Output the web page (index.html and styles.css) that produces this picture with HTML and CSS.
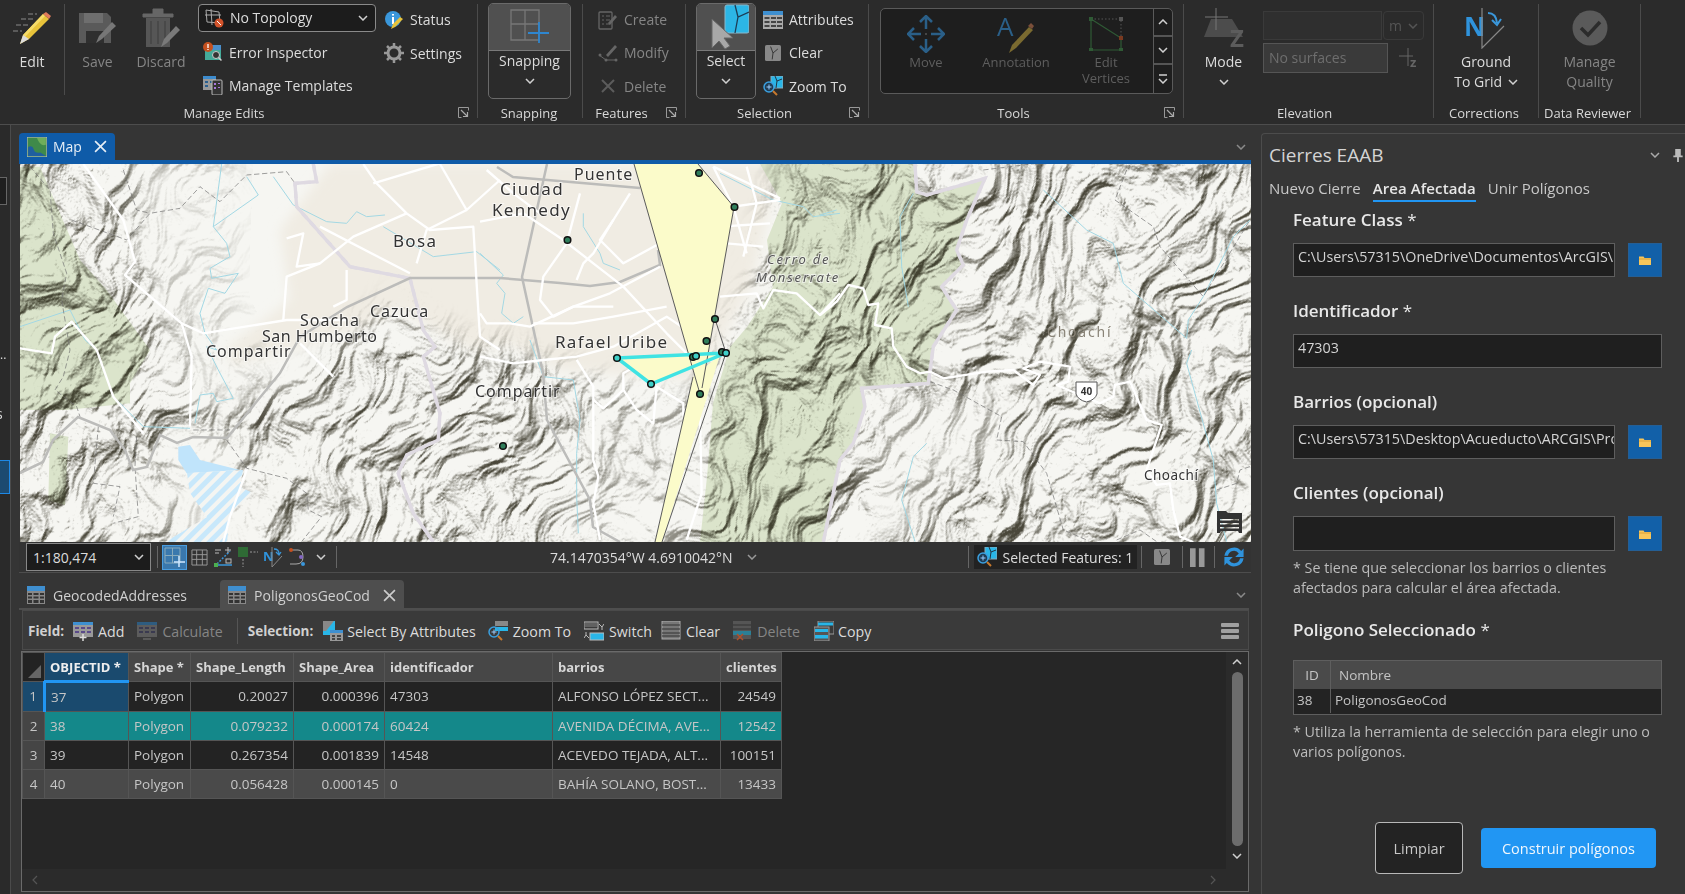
FILE: index.html
```html
<!DOCTYPE html>
<html>
    <head>
        <meta charset="UTF-8">
        <title>Cierres EAAB</title>
        <link rel="stylesheet" href="styles.css">
    </head>
    <body>
        <!-- shared icons -->
        <svg class="defs" width="0" height="0">
            <symbol id="chev" viewBox="0 0 10 6"><path d="M1 1l4 4 4-4" fill="none" stroke="currentColor" stroke-width="1.5"/></symbol>
            <symbol id="launch" viewBox="0 0 11 11"><path d="M.5 10.5V.5h10v3M.5 10.5h3" fill="none" stroke="#999"/><path d="M3 3l6 6M9.5 5v4.5H5" fill="none" stroke="#aaa" stroke-width="1.2"/></symbol>
            <symbol id="tbl" viewBox="0 0 18 18"><rect x="0" y="0" width="18" height="18" fill="#888"/><rect x="0" y="0" width="18" height="5" fill="#3f8fd0"/><path d="M1 7h4v2H1zM6.500 7h5v2h-5zM13 7h4v2h-4zM1 10.500h4v2H1zM6.500 10.500h5v2h-5zM13 10.500h4v2h-4zM1 14h4v3H1zM6.500 14h5v3h-5zM13 14h4v3h-4z" fill="#333"/></symbol>
            <symbol id="closex" viewBox="0 0 12 12"><path d="M1 1l10 10M11 1L1 11" stroke="currentColor" stroke-width="1.5" fill="none"/></symbol>
            <symbol id="folder" viewBox="0 0 12 10"><path d="M0 1.500h4.500l1 1.500H12v7H0z" fill="#f7c65b"/><path d="M0 3.500h12v1H0z" fill="#d9a03a"/></symbol>
            <symbol id="parcel" viewBox="0 0 20 20"><rect width="20" height="20" rx="2" fill="#888"/><path d="M7 2l3 8 6-5M10 10l-1 8" stroke="#333" fill="none" stroke-width="1.200"/></symbol>
            <symbol id="zoomsel" viewBox="0 0 20 20"><rect x="8" y="0" width="12" height="12" fill="#29b6e8" stroke="#8ab"/><path d="M12 0l2 5 5-2M14 5l-1 7" stroke="#234" fill="none"/><circle cx="6" cy="11" r="5" fill="#1f3d55" stroke="#3ba0e0" stroke-width="1.500"/><path d="M3.500 11h5M6 8.500v5" stroke="#9cf"/><path d="M10 15l4 4" stroke="#c8792e" stroke-width="2"/></symbol>
        </svg>

        <header class="ribbon">
            <section class="group g-edits">
                <div class="body">
                    <div class="big big-edit">
                        <div class="big-ico">
                            <svg width="40" height="34" viewBox="0 0 40 34"><path d="M8 33l3-9L31 3l6 5-20 20z" fill="#e8c33a"/><path d="M11 24l20-21 2 2-20 21z" fill="#f5dc6a"/><path d="M31 3l3-2 5 4-2 3z" fill="#e07b5a"/><path d="M8 33l3-9 6 4z" fill="#ddd"/><path d="M16 3h9M9 8h14M4 14h13M1 20h9" stroke="#8a8a8a" stroke-dasharray="5 2"/></svg>
                        </div>
                        <span>Edit</span>
                    </div>
                    <div class="big big-save dim">
                        <div class="big-ico">
                            <svg width="40" height="36" viewBox="0 0 40 36"><path d="M1 3h28l4 4v26H1z" fill="#5a5a5a"/><path d="M6 3h19v10H6z" fill="#6e6e6e"/><path d="M8 21h18v12H8z" fill="#2f2f2f"/><path d="M18 33l3-7 13-14 4 4-14 13z" fill="#777"/></svg>
                        </div>
                        <span>Save</span>
                    </div>
                    <div class="big big-discard dim">
                        <div class="big-ico">
                            <svg width="40" height="42" viewBox="0 0 40 42"><path d="M2 7h30v3H2zM12 7V2h10v5" fill="#666" stroke="#666"/><path d="M5 11h24v29H5z" fill="#565656"/><path d="M10 14v23M17 14v23M24 14v23" stroke="#3c3c3c"/><path d="M20 40l3-8 12-13 4 4-13 13z" fill="#7a7a7a"/></svg>
                        </div>
                        <span>Discard</span>
                    </div>
                    <div class="rows rows-topo">
                        <div class="combo">
                            <svg class="ico" viewBox="0 0 20 20"><path d="M2 2l13 2 1 11-13-1zM1 7h16M7 1l1 16" fill="none" stroke="#aaa"/><circle cx="15" cy="15" r="4.500" fill="#d2532b"/><path d="M13 13l4 4" stroke="#fff"/></svg>
                            <span class="combo-text">No Topology</span>
                            <svg class="chev" viewBox="0 0 10 6"><use href="#chev"/></svg>
                        </div>
                        <div class="row">
                            <svg class="ico" viewBox="0 0 20 20"><rect x="2" y="3" width="16" height="15" fill="#4a9"/><path d="M2 3h16v5H2z" fill="#4a8fcb"/><circle cx="5" cy="5" r="5" fill="#c4501f"/><path d="M5 2v4M5 7v1" stroke="#fff" stroke-width="1.300"/><circle cx="13" cy="13" r="3.500" fill="#333" stroke="#ccc"/><path d="M15.500 15.500l3 3" stroke="#ccc" stroke-width="1.500"/></svg>
                            <span>Error Inspector</span>
                        </div>
                        <div class="row">
                            <svg class="ico" viewBox="0 0 20 20"><rect x="0" y="1" width="13" height="14" fill="#999"/><rect x="0" y="1" width="13" height="3" fill="#3d8bcd"/><path d="M2 6h3v2H2zM7 6h4v2H7zM2 10h3v2H2z" fill="#2a5f8f"/><rect x="9" y="5" width="10" height="15" rx="1" fill="#333" stroke="#bbb"/><path d="M11 8h2v2h-2zM15 8h2v1h-2zM11 12h2v2h-2zM15 12h2v1h-2z" fill="#a7d"/></svg>
                            <span>Manage Templates</span>
                        </div>
                    </div>
                    <div class="rows rows-status">
                        <div class="row">
                            <svg class="ico" viewBox="0 0 20 20"><circle cx="9" cy="9" r="8" fill="#3a97db"/><path d="M9 4v1.500M9 7v7" stroke="#fff" stroke-width="2"/><path d="M7 19l2-5 7-7 3 2-8 8z" fill="#e8c33a"/></svg>
                            <span>Status</span>
                        </div>
                        <div class="row">
                            <svg class="ico" viewBox="0 0 20 20"><circle cx="10" cy="10" r="6" fill="none" stroke="#999" stroke-width="3"/><path d="M10 0v4M10 16v4M0 10h4M16 10h4M3 3l3 3M14 14l3 3M17 3l-3 3M6 14l-3 3" stroke="#999" stroke-width="2.500"/></svg>
                            <span>Settings</span>
                        </div>
                    </div>
                </div>
                <div class="glabel gl-edits"><span class="gl-text">Manage Edits</span><svg class="launcher" viewBox="0 0 11 11"><use href="#launch"/></svg></div>
            </section>

            <section class="group g-snap">
                <div class="body">
                    <div class="split">
                        <div class="split-top">
                            <svg width="40" height="36" viewBox="0 0 40 36"><path d="M1 1h28v30H1zM1 15h28M15 1v30" fill="none" stroke="#777" stroke-width="1.300"/><path d="M29 13v21M18 24h21" stroke="#2e86cf" stroke-width="1.800"/></svg>
                        </div>
                        <span>Snapping</span>
                        <svg class="chev chev-b" viewBox="0 0 10 6"><use href="#chev"/></svg>
                    </div>
                </div>
                <div class="glabel gl-snap"><span class="gl-text">Snapping</span></div>
            </section>

            <section class="group g-features">
                <div class="body">
                    <div class="rows rows-feat dim">
                        <div class="row">
                            <svg class="ico" viewBox="0 0 20 20"><rect x="1" y="2" width="13" height="17" rx="1" fill="none" stroke="#666" stroke-width="1.300"/><path d="M4 6h2M8 6h4M4 10h2M8 10h4M4 14h2M8 14h4" stroke="#666"/><path d="M10 13l7-8 2 2-7 8z" fill="#666"/></svg>
                            <span>Create</span>
                        </div>
                        <div class="row">
                            <svg class="ico" viewBox="0 0 20 20"><path d="M1 12l7 5h10" fill="none" stroke="#666"/><circle cx="2" cy="12" r="1.500" fill="#666"/><circle cx="8" cy="17" r="1.500" fill="#666"/><circle cx="18" cy="17" r="1.500" fill="#666"/><path d="M8 12l9-10 2 2-9 10z" fill="#666"/></svg>
                            <span>Modify</span>
                        </div>
                        <div class="row">
                            <svg class="ico" viewBox="0 0 20 20"><path d="M4 4l12 12M16 4L4 16" stroke="#5c5c5c" stroke-width="2"/></svg>
                            <span>Delete</span>
                        </div>
                    </div>
                </div>
                <div class="glabel"><span class="gl-text">Features</span><svg class="launcher" viewBox="0 0 11 11"><use href="#launch"/></svg></div>
            </section>

            <section class="group g-selection">
                <div class="body">
                    <div class="split split-select">
                        <div class="split-top">
                            <svg width="46" height="46" viewBox="0 0 46 46"><rect x="22" y="1" width="24" height="28" rx="2" fill="#2cb6e6" stroke="#88b8cc"/><path d="M32 1l3 12 11-5M35 13l-3 16" stroke="#1c3c55" stroke-width="1.300" fill="none"/><path d="M9 15v29l7-7 6 8 5-3-6-8h9z" fill="#a8a8a8" stroke="#666"/></svg>
                        </div>
                        <span>Select</span>
                        <svg class="chev chev-b" viewBox="0 0 10 6"><use href="#chev"/></svg>
                    </div>
                    <div class="rows rows-sel">
                        <div class="row">
                            <svg class="ico" viewBox="0 0 20 20"><rect x="0" y="1" width="20" height="18" fill="#aaa"/><rect x="0" y="1" width="20" height="4" fill="#3e8fd0"/><path d="M1.500 7h5v2h-5zM8 7h5v2H8zM14 7h5v2h-5zM1.500 11h5v2h-5zM8 11h5v2H8zM14 11h5v2h-5zM1.500 15h5v2h-5zM8 15h5v2H8zM14 15h5v2h-5z" fill="#444"/></svg>
                            <span>Attributes</span>
                        </div>
                        <div class="row">
                            <svg class="ico ico-sm" viewBox="0 0 20 20"><use href="#parcel"/></svg>
                            <span>Clear</span>
                        </div>
                        <div class="row">
                            <svg class="ico" viewBox="0 0 20 20"><use href="#zoomsel"/></svg>
                            <span>Zoom To</span>
                        </div>
                    </div>
                </div>
                <div class="glabel"><span class="gl-text">Selection</span><svg class="launcher" viewBox="0 0 11 11"><use href="#launch"/></svg></div>
            </section>

            <section class="group g-tools">
                <div class="body">
                    <div class="tool-box">
                        <div class="tool">
                            <div class="tool-ico">
                                <svg width="38" height="38" viewBox="0 0 38 38"><path d="M19 1v13M19 24v13M1 19h13M24 19h13M13 7l6-6 6 6M13 31l6 6 6-6M7 13l-6 6 6 6M31 13l6 6-6 6" fill="none" stroke="#2a5f88" stroke-width="2.500"/><circle cx="19" cy="19" r="1" fill="#555"/></svg>
                            </div>
                            <span>Move</span>
                        </div>
                        <div class="tool">
                            <div class="tool-ico">
                                <svg class="anno" width="38" height="40" viewBox="0 0 38 40"><text class="anno-a" x="0" y="22">A</text><path d="M12 39l3-8 17-18 4 3-17 18z" fill="#7a6a30"/><path d="M31 12l3-3 3 3-2 3z" fill="#7a4f3a"/></svg>
                            </div>
                            <span>Annotation</span>
                        </div>
                        <div class="tool">
                            <div class="tool-ico">
                                <svg width="34" height="34" viewBox="0 0 34 34"><path d="M2 2l30 19v12H2z" fill="none" stroke="#2f5a35" stroke-width="1.200"/><path d="M2 2h30v19" fill="none" stroke="#555" stroke-dasharray="1.500 2"/><rect x="0" y="0" width="4" height="4" fill="#2f5a35"/><rect x="30" y="0" width="4" height="4" fill="#555"/><rect x="30" y="19" width="4" height="4" fill="#7a3a20"/><rect x="0" y="31" width="4" height="3" fill="#2f5a35"/><rect x="30" y="31" width="4" height="3" fill="#2f5a35"/></svg>
                            </div>
                            <span>Edit<br>Vertices</span>
                        </div>
                        <div class="tool-scroll">
                            <div class="ts-cell"><svg class="chev chev-up" viewBox="0 0 10 6"><use href="#chev"/></svg></div>
                            <div class="ts-cell"><svg class="chev" viewBox="0 0 10 6"><use href="#chev"/></svg></div>
                            <div class="ts-cell ts-more"><svg class="chev" viewBox="0 0 10 10"><path d="M1 1h8M1 5l4 4 4-4" fill="none" stroke="currentColor" stroke-width="1.500"/></svg></div>
                        </div>
                    </div>
                </div>
                <div class="glabel"><span class="gl-text">Tools</span><svg class="launcher" viewBox="0 0 11 11"><use href="#launch"/></svg></div>
            </section>

            <section class="group g-elev">
                <div class="body">
                    <div class="big big-mode">
                        <div class="big-ico">
                            <svg width="42" height="40" viewBox="0 0 42 40"><path d="M8 11h21l11 18H1z" fill="#4c4c4c"/><path d="M13 0v22M2 9h23" stroke="#777"/><text class="mode-z" x="27" y="39">Z</text></svg>
                        </div>
                        <span>Mode</span>
                        <svg class="chev chev-b" viewBox="0 0 10 6"><use href="#chev"/></svg>
                    </div>
                    <div class="elev-fields">
                        <div class="elev-row">
                            <div class="elev-input"></div>
                            <div class="elev-unit"><span>m</span><svg class="chev" viewBox="0 0 10 6"><use href="#chev"/></svg></div>
                        </div>
                        <div class="elev-row elev-row-2">
                            <div class="elev-surface">No surfaces</div>
                            <svg class="elev-z" viewBox="0 0 20 20"><path d="M9 0v18M0 8h14" stroke="#666"/><text class="elev-z-t" x="11" y="19">z</text></svg>
                        </div>
                    </div>
                </div>
                <div class="glabel gl-elev"><span class="gl-text">Elevation</span></div>
            </section>

            <section class="group g-corr">
                <div class="body">
                    <div class="big">
                        <div class="big-ico">
                            <svg width="44" height="42" viewBox="0 0 44 42"><text class="ngrid" x="0" y="29">N</text><path d="M18 1v40L40 19" fill="none" stroke="#888" stroke-width="1.200"/><path d="M24 6q8 0 9 10M28 13l5 5 4-6" fill="none" stroke="#3a97db" stroke-width="2"/></svg>
                        </div>
                        <span>Ground</span>
                        <span>To Grid <svg class="chev chev-in" viewBox="0 0 10 6"><use href="#chev"/></svg></span>
                    </div>
                </div>
                <div class="glabel gl-side"><span class="gl-text">Corrections</span></div>
            </section>

            <section class="group g-review">
                <div class="body">
                    <div class="big dim">
                        <div class="big-ico">
                            <svg width="36" height="36" viewBox="0 0 36 36"><circle cx="18" cy="18" r="17.500" fill="#5a5a5a"/><path d="M9 18l7 7 12-13" fill="none" stroke="#2c2c2c" stroke-width="3.500"/></svg>
                        </div>
                        <span>Manage</span>
                        <span>Quality</span>
                    </div>
                </div>
                <div class="glabel gl-side"><span class="gl-text">Data Reviewer</span></div>
            </section>
        </header>

        <main class="workspace">
            <aside class="rail">
                <div class="rail-strip">
                    <div class="rail-box"></div>
                    <div class="rail-dots">.. </div>
                    <div class="rail-letter">s</div>
                    <div class="rail-active"></div>
                </div>
            </aside>

            <div class="center">
                <div class="doc-tabs">
                    <div class="map-tab">
                        <svg class="map-thumb" viewBox="0 0 18 18"><rect width="18" height="18" fill="#3f8a4a" stroke="#bbb"/><path d="M1 17V9q4-2 5 2t6 3l5 3z" fill="#1f5f9f"/><path d="M9 1h8v6q-5 2-8-6z" fill="#6fae5a"/></svg>
                        <span>Map</span>
                        <svg class="tab-x" viewBox="0 0 12 12"><use href="#closex"/></svg>
                    </div>
                    <svg class="chev doc-chev" viewBox="0 0 10 6"><use href="#chev"/></svg>
                </div>

                <div class="map-frame">
                    <svg class="map" viewBox="20 164 1231 378" width="1231" height="378">
                        <defs>
                            <filter id="hill" x="0" y="0" width="100%" height="100%" color-interpolation-filters="sRGB">
                                <feTurbulence type="fractalNoise" baseFrequency="0.008" numOctaves="3" seed="5" result="warp"/>
                                <feTurbulence type="fractalNoise" baseFrequency="0.034 0.016" numOctaves="7" seed="23" result="ridge"/>
                                <feDisplacementMap in="ridge" in2="warp" scale="120" xChannelSelector="R" yChannelSelector="G" result="bent"/>
                                <feDiffuseLighting in="bent" surfaceScale="15" diffuseConstant="1.270" lighting-color="#ffffff">
                                    <feDistantLight azimuth="215" elevation="55"/>
                                </feDiffuseLighting>
                                <feComponentTransfer>
                                    <feFuncR type="table" tableValues="0.30 1"/>
                                    <feFuncG type="table" tableValues="0.29 1"/>
                                    <feFuncB type="table" tableValues="0.24 1"/>
                                </feComponentTransfer>
                            </filter>
                            <filter id="soft"><feGaussianBlur stdDeviation="14"/></filter>
                            <filter id="soft-s"><feGaussianBlur stdDeviation="6"/></filter>
                            <mask id="hillmask" maskUnits="userSpaceOnUse" x="20" y="164" width="1231" height="378">
                                <rect x="20" y="164" width="1231" height="378" fill="#fff"/>
                                <g filter="url(#soft)">
                                    <polygon fill="#444" points="130,150 250,150 260,400 210,420 150,300"/>
                                    <polygon fill="#000" points="230,130 790,130 755,290 715,350 705,400 640,395 560,370 510,345 470,350 400,300 330,350 275,400 225,300"/>
                                    <polygon fill="#888" points="590,400 700,400 690,560 560,560"/>
                                    <polygon fill="#333" points="175,440 240,440 240,560 170,560"/>
                                    <polygon fill="#888" points="905,390 1010,400 1000,450 930,520 880,560 860,450"/>
                                </g>
                            </mask>
                            <pattern id="hatch" width="9" height="9" patternUnits="userSpaceOnUse" patternTransform="rotate(-45)">
                                <rect width="9" height="9" fill="#f4f5f2"/>
                                <rect width="9" height="5" fill="#c8e8fb"/>
                            </pattern>
                        </defs>

                        <rect x="20" y="164" width="1231" height="378" fill="#f6f6f2"/>
                        <polygon fill="#f0ece3" filter="url(#soft-s)" points="330,164 780,164 750,290 715,350 690,380 560,370 510,345 470,350 400,310 340,335 235,365 225,350 290,300 280,230"/>

                        <g class="green">
                            <polygon transform="translate(0,150) scale(.3333)" points="60,50 120,50 240,330 320,420 450,600 390,700 390,760 200,780 60,780"/>
                            <polygon transform="translate(0,150) scale(.3333)" points="150,850 205,860 195,1065 145,1050"/>
                            <polygon points="760,164 915,164 917,192 927,195 985,178 967,220 957,250 963,265 942,287 957,310 933,347 928,383 862,388 865,407 853,443 840,460 823,542 700,542 707,477 713,403 730,347 747,327 773,287 767,240 782,203"/>
                        </g>

                        <g class="hill" mask="url(#hillmask)">
                            <rect x="-250" y="-250" width="1800" height="1200" filter="url(#hill)" transform="rotate(30 635 353)"/>
                        </g>

                        <g transform="translate(0,150) scale(.3333)">
                            <polygon class="lake" points="535,890 570,885 600,930 720,960 560,970 535,930"/>
                            <polygon fill="url(#hatch)" transform="scale(3)" points="187,323 243,320 240,337 253,343 230,363 227,392 165,392 177,385 207,367 190,343"/>
                        </g>

                        <g class="streams">
                            <g transform="translate(0,150) scale(.3333)">
                                <polyline points="665,42 640,230 680,280 690,320 630,355 635,385 715,370 675,430 625,415 600,490 615,550 650,600 620,590 655,660 700,745 650,755 640,730 600,735 585,820"/>
                                <polyline points="820,80 880,165 980,215 1040,220 1070,185 1100,200 1155,195"/>
                                <polyline points="740,80 775,135 640,230"/>
                                <polyline points="60,530 210,480 255,570 290,600 340,740 430,830 570,835"/>
                                <polyline points="1150,230 1300,320 1430,305 1500,360"/>
                            </g>
                            <g transform="translate(480,160) scale(.3333)">
                                <polyline points="0,280 70,345 50,370 75,400 65,460 100,490 130,470"/>
                                <polyline points="310,160 310,200 360,280 370,310 420,330"/>
                                <polyline points="150,540 190,650 280,660 300,780 290,880 290,1010 295,1120"/>
                                <polyline points="720,40 880,120 970,140 1000,170 1080,160"/>
                            </g>
                            <g transform="translate(820,150) scale(.3333)">
                                <polyline points="670,120 800,240 880,280 910,400 1100,565 1105,510 1150,440 1240,260 1290,210"/>
                                <polyline points="1115,600 1100,640 1180,930 1190,1060 1220,1175"/>
                                <polyline points="320,880 280,920 245,1050 285,1175"/>
                                <polyline points="280,130 240,200 245,350 265,470"/>
                                <polyline points="0,195 50,180"/>
                            </g>
                        </g>

                        <g class="admin">
                            <g transform="translate(0,150) scale(.3333)">
                                <polyline points="90,50 150,120 160,250 200,370 185,450 210,600 190,680 165,720 230,770 240,800"/>
                                <polyline points="215,210 380,270 450,190 540,175 600,110 660,155 740,75 860,65 885,100"/>
                                <polyline points="370,60 410,180 450,190"/>
                                <polyline points="410,860 405,950 415,1100 340,1120"/>
                                <polyline points="680,870 740,955 860,985 920,1030 925,1080 965,1100 905,1175"/>
                                <polyline points="295,830 280,1000 360,1010 340,1100"/>
                                <polyline points="580,840 690,840"/>
                            </g>
                            <g transform="translate(820,150) scale(.3333)">
                                <polyline points="490,60 650,40"/>
                                <polyline points="920,60 885,150 1000,230 1020,290 1150,440 1290,210"/>
                                <polyline points="330,695 400,720 545,800 530,870 610,875 680,970 730,1140 800,1170"/>
                                <polyline points="890,1170 960,1140 1010,1175"/>
                                <polyline points="1190,1020 1250,1000 1260,960 1290,950"/>
                            </g>
                        </g>

                        <g class="border-casing">
                            <polyline id="dept1" transform="translate(0,150) scale(.3333)" points="940,42 950,95 885,100 890,170 1050,350 1230,385 1270,540 1305,590 1270,620 1320,790 1315,870 1220,915 1195,970 1240,1090 1300,1176"/>
                            <polyline id="dept2" transform="translate(820,150) scale(.3333)" points="285,42 290,125 320,135 495,85 440,210 410,300 430,345 365,410 410,480 340,590 325,700 125,715 135,770 100,880 60,930 10,1176"/>
                        </g>
                        <g class="border-dash">
                            <use href="#dept1"/>
                            <use href="#dept2"/>
                        </g>

                        <g class="grey-roads">
                            <polyline points="20,473 43,462 53,440 78,417 110,430 125,450 133,470 147,467 160,435 177,443 193,437 227,438 280,373 300,337 347,307 410,278 500,278 560,283 590,286 620,282 660,265 658,250"/>
                            <polyline points="547,164 522,277 543,373 547,420 590,500 593,527 620,542"/>
                            <polyline points="497,167 513,177 640,188"/>
                        </g>

                        <g class="white-roads">
                            <g transform="translate(0,150) scale(.3333)">
                                <polyline points="250,42 370,210 405,335 375,375 545,520 575,620 570,830"/>
                                <polyline points="545,520 610,550 860,510 1040,510"/>
                                <polyline points="60,595 155,610 165,560 215,515 290,600 340,740 430,850"/>
                                <polyline points="1090,42 1130,100 1220,190 1290,240 1420,230 1430,400 1440,560 1500,600"/>
                                <polyline points="1120,100 1320,40"/>
                                <polyline points="1220,190 1060,260 960,340 860,380 850,510"/>
                                <polyline points="1320,42 1400,180 1500,90"/>
                                <polyline points="1400,180 1280,240 1250,340"/>
                                <polyline points="860,265 910,250 890,350 960,340"/>
                                <polyline points="960,230 1230,370"/>
                                <polyline points="1040,360 1040,450 1000,470"/>
                                <polyline points="900,580 1000,680"/>
                                <polyline points="740,960 690,1100 670,1176"/>
                            </g>
                            <g transform="translate(480,160) scale(.3333)">
                                <polyline points="0,185 130,160 250,240 340,310 430,380 560,520 640,600"/>
                                <polyline points="300,100 260,250 190,350 180,420 220,470 280,440 400,440"/>
                                <polyline points="0,460 20,490 90,490 150,500 280,440 390,400 540,320"/>
                                <polyline points="400,180 340,280 310,310 290,360"/>
                                <polyline points="450,100 400,180 360,240 430,310 540,250"/>
                                <polyline points="160,490 280,490 400,470 560,440"/>
                                <polyline points="0,590 100,610 190,600 290,590 400,560 560,470 620,510"/>
                                <polyline points="290,600 340,680 340,900 355,950 340,1030 360,1140"/>
                                <polyline points="340,720 370,745 430,690 430,640 500,600"/>
                                <polyline points="430,690 470,750 520,790 530,680 610,730 610,770"/>
                                <polyline points="660,760 665,1000 620,1140"/>
                                <polyline points="20,30 100,100 180,160"/>
                                <polyline points="700,20 760,140 800,280"/>
                                <polyline points="760,140 900,120"/>
                                <polyline points="700,20 900,115"/>
                                <polyline points="800,20 830,130 790,290"/>
                                <polyline points="740,250 850,260"/>
                                <polyline points="720,200 870,190"/>
                                <polyline points="720,410 830,400 850,445 880,390 950,400 1020,465 1080,400"/>
                            </g>
                            <polyline transform="translate(820,150) scale(.3333)" points="0,495 50,455 85,405 130,415 145,465 175,460 165,525 215,535 220,590 260,650 300,670 330,665 370,685 500,665 580,660 640,705 660,675 610,655 660,635 750,650 745,695 710,705 840,760 880,740 885,705 930,695 980,810 1025,825 1000,900 980,960 1010,1005 1050,1000 1060,1080 1080,1160 1120,1176"/>
                        </g>

                        <g class="yellow">
                            <polygon points="634,164 698,164 734,207 702,388 700,394"/>
                            <polygon points="720,355 662,542 655,542 693,377"/>
                        </g>
                        <polygon class="sel-fill" points="617,358 726,353 651,384"/>
                        <g class="poly-line">
                            <polyline points="634,164 700,394"/>
                            <polyline points="698,164 734,207 702,388"/>
                            <polyline points="715,319 726,353"/>
                            <polyline points="693,377 655,542"/>
                            <polyline points="726,353 662,542"/>
                        </g>
                        <polygon class="sel-line" points="617,358 726,353 651,384"/>

                        <g class="dots">
                            <circle cx="699" cy="173" r="3.300"/>
                            <circle cx="734.500" cy="207" r="3.300"/>
                            <circle cx="567.500" cy="240" r="3.300"/>
                            <circle cx="715" cy="319" r="3.300"/>
                            <circle cx="706.500" cy="341" r="3.300"/>
                            <circle cx="700" cy="394" r="3.300"/>
                            <circle cx="503" cy="446" r="3.300"/>
                            <circle cx="693" cy="357" r="3.300"/>
                            <circle cx="722" cy="352" r="3.300"/>
                        </g>
                        <g class="dots-sel">
                            <circle cx="617" cy="358" r="3.300"/>
                            <circle cx="651" cy="384" r="3.300"/>
                            <circle cx="696" cy="356" r="3.300"/>
                            <circle cx="726" cy="353" r="3.300"/>
                        </g>

                        <g class="lbl">
                            <text x="574" y="180">Puente</text>
                            <text class="lbl-big" x="500" y="195">Ciudad</text>
                            <text class="lbl-big" x="492" y="216">Kennedy</text>
                            <text class="lbl-big" x="393" y="247">Bosa</text>
                            <text x="370" y="317">Cazuca</text>
                            <text x="300" y="326">Soacha</text>
                            <text class="lbl-sm2" x="262" y="342">San Humberto</text>
                            <text x="206" y="357">Compartir</text>
                            <text class="lbl-big" x="555" y="348">Rafael Uribe</text>
                            <text x="475" y="397">Compartir</text>
                            <text class="lbl-it" x="767" y="264">Cerro de</text>
                            <text class="lbl-it" x="756" y="282">Monserrate</text>
                            <text class="lbl-light" x="1047" y="337">Choachí</text>
                            <text class="lbl-small" x="1144" y="480">Choachí</text>
                        </g>

                        <path d="M1076 382h21v12q-2 6-10.500 8-8.500-2-10.500-8z" fill="#fff" stroke="#555"/>
                        <text class="shield" x="1086.500" y="395">40</text>

                        <path class="mapnote" d="M1217 511h9l2 2h14v20h-3l-1-2h-17l-1 2h-3zM1220 519h19v1.500h-19zM1220 523h19v1.500h-19zM1220 527h19v1.500h-19z"/>
                    </svg>

                    <div class="status-bar">
                        <div class="scale-box"><span>1:180,474</span><svg class="chev" viewBox="0 0 10 6"><use href="#chev"/></svg></div>
                        <i class="vsep sep-a"></i>
                        <div class="st-active">
                            <svg width="22" height="21" viewBox="0 0 22 21"><path d="M1 1h15v15H1zM1 8.500h15M8.500 1v15" fill="none" stroke="#8ab" /><path d="M15 9v11M10 15h11" stroke="#cfe8ff" stroke-width="1.500"/></svg>
                        </div>
                        <svg class="st-ico st-grid" viewBox="0 0 18 18"><path d="M1 1h16v16H1zM1 6h16M1 11h16M6 1v16M12 1v16" fill="none" stroke="#999"/></svg>
                        <svg class="st-ico" viewBox="0 0 20 20"><path d="M4 17L17 4" stroke="#3a97db" stroke-dasharray="2 1.500" stroke-width="1.500"/><path d="M3 18h16" stroke="#3a97db" stroke-width="1.500"/><rect x="1" y="16" width="4" height="4" fill="#4caf50"/><rect x="13" y="12" width="5" height="4" fill="none" stroke="#bbb"/><path d="M2 3h6M2 6h4M12 3h6M15 0v6" stroke="#bbb"/></svg>
                        <svg class="st-ico" viewBox="0 0 20 20"><rect x="0" y="0" width="10" height="10" fill="#2f6b35"/><path d="M5 12v8M12 5h8" stroke="#999" stroke-dasharray="2 1.500"/></svg>
                        <svg class="st-ico" viewBox="0 0 20 20"><text class="ngrid-s" x="0" y="14">N</text><path d="M9 0v20L19 9" fill="none" stroke="#888"/><path d="M11 2q5 0 5 5M13 5l3 3 2-3" fill="none" stroke="#3a97db" stroke-width="1.300"/></svg>
                        <svg class="st-ico" viewBox="0 0 20 20"><path d="M3 3h7q5 0 5 7t-7 7H2" fill="none" stroke="#aaa"/><circle cx="3" cy="3" r="2" fill="#c4501f"/><circle cx="13" cy="10" r="2" fill="#8466c4"/><circle cx="15" cy="17" r="2" fill="#3a97db"/></svg>
                        <svg class="chev st-chev" viewBox="0 0 10 6"><use href="#chev"/></svg>
                        <i class="vsep sep-b"></i>
                        <span class="coords">74.1470354°W 4.6910042°N</span>
                        <svg class="chev coords-chev" viewBox="0 0 10 6"><use href="#chev"/></svg>
                        <i class="vsep sep-c"></i>
                        <div class="sel-count">
                            <svg class="st-ico" viewBox="0 0 20 20"><use href="#zoomsel"/></svg>
                            <span>Selected Features: 1</span>
                        </div>
                        <i class="vsep sep-d"></i>
                        <svg class="st-parcel" viewBox="0 0 20 20"><use href="#parcel"/></svg>
                        <i class="vsep sep-e"></i>
                        <svg class="st-pause" viewBox="0 0 16 20"><path d="M0 0h6v20H0zM9.500 0h6v20h-6z" fill="#999"/></svg>
                        <i class="vsep sep-f"></i>
                        <svg class="st-refresh" viewBox="0 0 20 20"><path d="M2 9a8 8 0 0 1 14-4l2-2v7h-7l3-3a5 5 0 0 0-9 2zM18 11a8 8 0 0 1-14 4l-2 2v-7h7l-3 3a5 5 0 0 0 9-2z" fill="#2f93dc"/></svg>
                    </div>
                </div>

                <div class="table-tabs">
                    <div class="t-tab">
                        <svg class="tbl-ico" viewBox="0 0 18 18"><use href="#tbl"/></svg>
                        <span>GeocodedAddresses</span>
                    </div>
                    <div class="t-tab t-tab-on">
                        <svg class="tbl-ico" viewBox="0 0 18 18"><use href="#tbl"/></svg>
                        <span>PoligonosGeoCod</span>
                        <svg class="tab-x tab-x-t" viewBox="0 0 12 12"><use href="#closex"/></svg>
                    </div>
                    <svg class="chev doc-chev" viewBox="0 0 10 6"><use href="#chev"/></svg>
                </div>

                <div class="table-panel">
                    <div class="toolbar">
                        <b class="tb-head">Field:</b>
                        <div class="tb-btn tb-add">
                            <svg class="tb-ico" viewBox="0 0 20 20"><rect y="1" width="20" height="15" fill="#999"/><rect y="1" width="20" height="3" fill="#3e8fd0"/><path d="M2 6h4v2H2zM8 6h4v2H8zM14 6h4v2h-4zM2 10h4v2H2zM8 10h4v2H8zM14 10h4v2h-4z" fill="#5a4a8a"/><path d="M10 13v7M6.500 16.500h7" stroke="#ddd" stroke-width="1.500"/></svg>
                            <span>Add</span>
                        </div>
                        <div class="tb-btn tb-calc dim">
                            <svg class="tb-ico" viewBox="0 0 20 20"><rect y="1" width="20" height="15" fill="#5c5c5c"/><rect y="1" width="20" height="3" fill="#2e5c80"/><path d="M2 6h4v2H2zM8 6h4v2H8zM14 6h4v2h-4zM2 10h4v2H2zM8 10h4v2H8zM14 10h4v2h-4z" fill="#3a3a50"/><path d="M6 18h8" stroke="#666" stroke-width="1.500"/></svg>
                            <span>Calculate</span>
                        </div>
                        <i class="tb-sep"></i>
                        <b class="tb-head">Selection:</b>
                        <div class="tb-btn tb-sba">
                            <svg class="tb-ico" viewBox="0 0 20 20"><path d="M0 0h12v14H0z" fill="#29b6e8"/><path d="M0 0h11L3 10H0z" fill="#888"/><rect x="7" y="9" width="13" height="11" fill="#999"/><rect x="7" y="9" width="13" height="3" fill="#3e8fd0"/><path d="M9 14h3v2H9zM14 14h4v2h-4zM9 17h3v2H9zM14 17h4v2h-4z" fill="#444"/></svg>
                            <span>Select By Attributes</span>
                        </div>
                        <div class="tb-btn tb-zoom">
                            <svg class="tb-ico" viewBox="0 0 20 20"><rect x="7" y="0" width="13" height="5" fill="#888"/><rect x="7" y="6" width="13" height="4" fill="#29b6e8"/><circle cx="6" cy="11" r="5" fill="none" stroke="#3ba0e0" stroke-width="1.500"/><path d="M3.500 11h5M6 8.500v5" stroke="#9cf"/><path d="M10 15l4 4" stroke="#c8792e" stroke-width="2"/></svg>
                            <span>Zoom To</span>
                        </div>
                        <div class="tb-btn tb-switch">
                            <svg class="tb-ico" viewBox="0 0 20 20"><rect x="0" y="1" width="14" height="7" fill="none" stroke="#bbb"/><path d="M1 3h12M1 5h12" stroke="#888"/><rect x="6" y="12" width="14" height="7" fill="#29b6e8" stroke="#bbb"/><path d="M15 3l3 3 2-3M18 6v3M5 17l-3-3-2 3M2 14v-3" fill="none" stroke="#bbb"/></svg>
                            <span>Switch</span>
                        </div>
                        <div class="tb-btn tb-clear">
                            <svg class="tb-ico" viewBox="0 0 20 20"><rect x="1" y="0" width="18" height="18" fill="#777" stroke="#aaa"/><path d="M1 4h18M1 8h18M1 12h18M1 15h18" stroke="#333"/></svg>
                            <span>Clear</span>
                        </div>
                        <div class="tb-btn tb-del dim">
                            <svg class="tb-ico" viewBox="0 0 20 20"><rect x="1" y="0" width="18" height="18" fill="#555"/><path d="M1 4h18M1 8h18" stroke="#333"/><rect x="1" y="10" width="18" height="4" fill="#2b7f96"/><path d="M5 13l6 6M11 13l-6 6" stroke="#b2502a" stroke-width="1.500"/></svg>
                            <span>Delete</span>
                        </div>
                        <div class="tb-btn tb-copy">
                            <svg class="tb-ico" viewBox="0 0 20 20"><rect x="4" y="0" width="16" height="13" fill="none" stroke="#999"/><rect x="4" y="1.500" width="15" height="3" fill="#29b6e8"/><rect x="0" y="6" width="15" height="14" fill="#555" stroke="#999"/><rect x="1" y="8" width="13" height="3" fill="#29b6e8"/><rect x="1" y="14" width="13" height="3.500" fill="#29b6e8"/></svg>
                            <span>Copy</span>
                        </div>
                        <div class="tb-menu"><i></i><i></i><i></i></div>
                    </div>

                    <div class="grid-frame">
                        <div class="grid-main">
                            <table class="grid">
                                <colgroup>
                                    <col class="c-num"><col class="c-oid"><col class="c-shape"><col class="c-len"><col class="c-area"><col class="c-ident"><col class="c-barrios"><col class="c-cli">
                                </colgroup>
                                <tr class="head">
                                    <th class="corner"><span class="corner-tri"></span></th>
                                    <th class="sorted">OBJECTID *</th>
                                    <th>Shape *</th>
                                    <th>Shape_Length</th>
                                    <th>Shape_Area</th>
                                    <th>identificador</th>
                                    <th>barrios</th>
                                    <th>clientes</th>
                                </tr>
                                <tr class="r-cur">
                                    <td class="num">1</td><td class="oid">37</td><td>Polygon</td><td class="n">0.20027</td><td class="n">0.000396</td><td>47303</td><td>ALFONSO LÓPEZ SECT...</td><td class="n">24549</td>
                                </tr>
                                <tr class="r-sel">
                                    <td class="num">2</td><td>38</td><td>Polygon</td><td class="n">0.079232</td><td class="n">0.000174</td><td>60424</td><td>AVENIDA DÉCIMA, AVE...</td><td class="n">12542</td>
                                </tr>
                                <tr>
                                    <td class="num">3</td><td>39</td><td>Polygon</td><td class="n">0.267354</td><td class="n">0.001839</td><td>14548</td><td>ACEVEDO TEJADA, ALT...</td><td class="n">100151</td>
                                </tr>
                                <tr class="r-alt">
                                    <td class="num">4</td><td>40</td><td>Polygon</td><td class="n">0.056428</td><td class="n">0.000145</td><td>0</td><td>BAHÍA SOLANO, BOST...</td><td class="n">13433</td>
                                </tr>
                            </table>
                            <div class="hscroll">
                                <svg class="hs-l" viewBox="0 0 6 10"><path d="M5 1L1 5l4 4" fill="none" stroke="#555" stroke-width="1.200"/></svg>
                                <svg class="hs-r" viewBox="0 0 6 10"><path d="M1 1l4 4-4 4" fill="none" stroke="#555" stroke-width="1.200"/></svg>
                            </div>
                        </div>
                        <div class="vscroll">
                            <svg class="chev chev-up" viewBox="0 0 10 6"><use href="#chev"/></svg>
                            <div class="thumb"></div>
                            <svg class="chev" viewBox="0 0 10 6"><use href="#chev"/></svg>
                        </div>
                    </div>
                </div>
            </div>

            <section class="panel">
                <div class="panel-head">
                    <span class="panel-title">Cierres EAAB</span>
                    <svg class="chev panel-chev" viewBox="0 0 10 6"><use href="#chev"/></svg>
                    <svg class="panel-pin" viewBox="0 0 10 14"><path d="M2 0h6v7h2v2H6v5H4V9H0V7h2z" fill="#bbb"/></svg>
                </div>
                <nav class="panel-tabs">
                    <span>Nuevo Cierre</span>
                    <span class="on">Area Afectada</span>
                    <span>Unir Polígonos</span>
                </nav>
                <div class="form">
                    <label class="f-label f-first">Feature Class <em>*</em></label>
                    <div class="f-row">
                        <div class="f-input">C:\Users\57315\OneDrive\Documentos\ArcGIS\Projects</div>
                        <button class="f-btn"><svg viewBox="0 0 12 10"><use href="#folder"/></svg></button>
                    </div>
                    <label class="f-label">Identificador <em>*</em></label>
                    <div class="f-row">
                        <div class="f-input f-wide">47303</div>
                    </div>
                    <label class="f-label">Barrios (opcional)</label>
                    <div class="f-row">
                        <div class="f-input">C:\Users\57315\Desktop\Acueducto\ARCGIS\Projects</div>
                        <button class="f-btn"><svg viewBox="0 0 12 10"><use href="#folder"/></svg></button>
                    </div>
                    <label class="f-label">Clientes (opcional)</label>
                    <div class="f-row f-row-tall">
                        <div class="f-input"></div>
                        <button class="f-btn"><svg viewBox="0 0 12 10"><use href="#folder"/></svg></button>
                    </div>
                    <p class="f-note">* Se tiene que seleccionar los barrios o clientes<br>afectados para calcular el área afectada.</p>
                    <label class="f-label f-poly">Poligono Seleccionado <em>*</em></label>
                    <div class="mini">
                        <div class="mini-head"><span class="m-id">ID</span><span class="m-name">Nombre</span></div>
                        <div class="mini-row"><span class="m-id m-left">38</span><span class="m-name">PoligonosGeoCod</span></div>
                    </div>
                    <p class="f-note">* Utiliza la herramienta de selección para elegir uno o<br>varios polígonos.</p>
                </div>
                <div class="actions">
                    <button class="btn-clear">Limpiar</button>
                    <button class="btn-build">Construir polígonos</button>
                </div>
            </section>
        </main>
    </body>
</html>
```

FILE: styles.css
```css
html, body {
    width: 1685px;
    height: 894px;
    margin: 0;
    overflow: hidden;
}

body {
    background: #353535;
    color: #dcdcdc;
    font-family: "Open Sans", "Noto Sans", sans-serif;
    font-size: 14px;
    display: flex;
    flex-direction: column;
}

.defs {
    position: absolute;
}

.dim {
    color: #858585;
}

.chev {
    display: block;
    width: 10px;
    height: 6px;
    color: #d0d0d0;
    flex: none;
}

.chev-up {
    transform: rotate(180deg);
}

/* ribbon */
.ribbon {
    height: 124px;
    background: #2b2b2b;
    border-bottom: 1px solid #4d4d4d;
    display: flex;
    align-items: flex-start;
    flex: none;
}

.group {
    height: 114px;
    margin-top: 4px;
    border-right: 1px solid #4b4b4b;
    display: flex;
    flex-direction: column;
    flex: none;
    box-sizing: border-box;
}

.g-edits { width: 478px; }
.g-snap { width: 105px; }
.g-features { width: 103px; }
.g-selection { width: 183px; }
.g-tools { width: 315px; }
.g-elev { width: 250px; }
.g-corr { width: 105px; }
.g-review { width: 102px; }

.body {
    height: 99px;
    display: flex;
    flex: none;
}

.glabel {
    height: 15px;
    line-height: 20px;
    font-size: 13px;
    display: flex;
    color: #d8d8d8;
}

.gl-edits { padding-right: 0; }
.gl-edits .gl-text { padding-right: 4px; }
.gl-snap .gl-text { padding-right: 2px; }
.gl-elev .gl-text { padding-right: 8px; }
.gl-side .gl-text { padding-right: 4px; }

.gl-text {
    flex: 1;
    text-align: center;
}

.launcher {
    width: 11px;
    height: 11px;
    margin: 4px 8px 0 6px;
}

.big {
    display: flex;
    flex-direction: column;
    align-items: center;
    line-height: 20px;
    font-size: 14px;
    flex: 1;
}

.big-ico {
    height: 48px;
    display: flex;
    align-items: center;
    justify-content: center;
}

.chev-b {
    margin-top: 7px;
}

.chev-in {
    display: inline-block;
    margin-left: 2px;
    vertical-align: 2px;
}

.big-edit {
    flex: none;
    width: 64px;
    height: 91px;
    border-right: 1px solid #4b4b4b;
}

.big-save {
    flex: none;
    width: 65px;
}

.big-discard {
    flex: none;
    width: 62px;
}

.big-mode {
    flex: none;
    width: 79px;
}

.rows {
    display: flex;
    flex-direction: column;
    flex: none;
    margin-top: -1px;
}

.row {
    height: 33.500px;
    display: flex;
    align-items: center;
    gap: 6px;
    white-space: nowrap;
}

.ico {
    width: 20px;
    height: 20px;
    flex: none;
}

.ico-sm {
    padding: 2px;
    box-sizing: border-box;
}

.rows-topo {
    margin-left: 6px;
    margin-top: 0;
    width: 178px;
}

.rows-topo .row {
    padding-left: 5px;
    position: relative;
    top: -1px;
}

.combo {
    height: 28px;
    margin-bottom: 5px;
    box-sizing: border-box;
    border: 1px solid #8a8a8a;
    border-radius: 4px;
    background: #1c1c1c;
    display: flex;
    align-items: center;
    gap: 6px;
    padding: 0 7px 0 5px;
}

.combo-text {
    flex: 1;
}

.rows-status {
    margin-left: 8px;
}

.rows-feat {
    margin-left: 15px;
}

.rows-sel {
    margin-left: 7px;
    width: 90px;
    overflow: hidden;
}

.split {
    margin: -1px 0 0 10px;
    width: 83px;
    height: 96px;
    box-sizing: border-box;
    border: 1px solid #6a6a6a;
    border-radius: 5px;
    display: flex;
    flex-direction: column;
    align-items: center;
    line-height: 20px;
}

.split-top {
    width: 100%;
    height: 47px;
    flex: none;
    box-sizing: border-box;
    background: #505050;
    border-bottom: 1px solid #7a7a7a;
    border-radius: 4px 4px 0 0;
    display: flex;
    align-items: center;
    justify-content: center;
}

.split-select {
    width: 60px;
}

/* tool gallery */
.tool-box {
    margin: 4px 0 0 11px;
    width: 293px;
    height: 86px;
    box-sizing: border-box;
    background: #1e1e1e;
    border: 1px solid #5a5a5a;
    border-radius: 5px;
    display: flex;
}

.tool {
    width: 90px;
    padding-top: 4px;
    display: flex;
    flex-direction: column;
    align-items: center;
    text-align: center;
    font-size: 13px;
    line-height: 16px;
    color: #5e5e5e;
}

.tool-ico {
    height: 41px;
    display: flex;
    align-items: center;
    justify-content: center;
}

.anno {
    overflow: visible;
}

.anno-a {
    font-size: 26px;
    fill: #2a5f88;
}

.tool-scroll {
    margin-left: auto;
    width: 18px;
    border-left: 1px solid #5a5a5a;
    display: flex;
    flex-direction: column;
}

.ts-cell {
    height: 28px;
    border-bottom: 2px solid #555;
    box-sizing: border-box;
    display: flex;
    align-items: center;
    justify-content: center;
}

.ts-more {
    border-bottom: 0;
}

.ts-more .chev {
    height: 10px;
}

/* elevation */
.elev-fields {
    margin-top: 7px;
}

.elev-row {
    display: flex;
    align-items: center;
}

.elev-row-2 {
    margin-top: 3px;
}

.elev-input {
    width: 119px;
    height: 29px;
    box-sizing: border-box;
    background: #2f2f2f;
    border: 1px solid #3a3a3a;
}

.elev-unit {
    width: 41px;
    height: 29px;
    margin-left: 1px;
    box-sizing: border-box;
    border: 1px solid #3a3a3a;
    border-radius: 4px;
    display: flex;
    align-items: center;
    justify-content: center;
    gap: 6px;
    color: #555;
}

.elev-unit .chev {
    color: #555;
}

.elev-surface {
    width: 125px;
    height: 30px;
    line-height: 28px;
    padding-left: 5px;
    box-sizing: border-box;
    background: #3a3a3a;
    border: 1px solid #555;
    color: #6e6e6e;
}

.elev-z {
    width: 20px;
    height: 20px;
    margin-left: 11px;
}

.elev-z-t {
    font-size: 13px;
    font-weight: bold;
    fill: #666;
}

.mode-z {
    font-size: 24px;
    font-weight: bold;
    fill: #5c5c5c;
}

.ngrid {
    font-size: 26px;
    font-weight: bold;
    fill: #2f93dc;
}

.ngrid-s {
    font-size: 13px;
    font-weight: bold;
    fill: #2f93dc;
}

/* workspace */
.workspace {
    display: flex;
    flex: 1;
    min-height: 0;
}

.rail {
    width: 19px;
    flex: none;
}

.rail-strip {
    width: 11px;
    height: 100%;
    box-sizing: border-box;
    background: #2a2a2a;
    border-right: 1px solid #4b4b4b;
    overflow: hidden;
}

.rail-box {
    margin-top: 52px;
    width: 7px;
    height: 28px;
    box-sizing: border-box;
    background: #1e1e1e;
    border: 1px solid #666;
    border-left: 0;
}

.rail-dots {
    margin-top: 145px;
    height: 16px;
    line-height: 10px;
    font-size: 12px;
}

.rail-letter {
    margin-top: 38px;
    height: 20px;
    line-height: 20px;
    font-size: 14px;
    margin-left: -4px;
}

.rail-active {
    margin-top: 36px;
    width: 10px;
    height: 34px;
    box-sizing: border-box;
    background: #1c4a70;
    border: 1px solid #1e88e5;
    border-left: 0;
}

.center {
    width: 1234px;
    flex: none;
    display: flex;
    flex-direction: column;
}

.doc-tabs {
    height: 35px;
    display: flex;
    align-items: flex-end;
    flex: none;
}

.map-tab {
    width: 96px;
    height: 27px;
    box-sizing: border-box;
    background: #0f5ba8;
    border-radius: 4px 4px 0 0;
    padding: 0 8px;
    display: flex;
    align-items: center;
    gap: 6px;
    color: #e6eef6;
}

.map-thumb {
    width: 20px;
    height: 20px;
}

.tab-x {
    width: 13px;
    height: 13px;
    margin-left: auto;
    color: #e6eef6;
}

.doc-chev {
    margin: 0 7px 10px auto;
    color: #8a8a8a;
}

.map-frame {
    border-top: 4px solid #0f5ba8;
    flex: none;
    margin-right: 2px;
}

.map {
    display: block;
    margin-left: 1px;
}

.green polygon {
    fill: #dbe4cb;
}

.hill {
    mix-blend-mode: multiply;
}

.lake {
    fill: #c0e4fb;
}

.streams polyline {
    fill: none;
    stroke: #a3d8e4;
    stroke-width: 3;
}

.admin polyline {
    fill: none;
    stroke: #6f6f6f;
    stroke-width: 2;
    stroke-dasharray: 16 8;
}

.border-casing polyline {
    fill: none;
    stroke: #dfdae2;
    stroke-width: 10;
}

.border-dash use {
    fill: none;
    stroke: #8f8a94;
    stroke-width: 2;
    stroke-dasharray: 20 16;
}

.grey-roads polyline {
    fill: none;
    stroke: #bcbcba;
    stroke-width: 2.500;
}

.white-roads polyline {
    fill: none;
    stroke: #fff;
    stroke-width: 7;
    stroke-linejoin: round;
}

.yellow polygon,
.sel-fill {
    fill: #fbfbca;
}

.poly-line polyline {
    fill: none;
    stroke: #5a5a5a;
    stroke-width: 1;
}

.sel-line {
    fill: none;
    stroke: #3fe3e3;
    stroke-width: 3.500;
}

.dots circle {
    fill: #2f7d5a;
    stroke: #111;
    stroke-width: 1.500;
}

.dots-sel circle {
    fill: #3fd0c8;
    stroke: #111;
    stroke-width: 1.500;
}

.lbl text {
    font-family: "Noto Sans", sans-serif;
    font-size: 16px;
    letter-spacing: 1px;
    fill: #333;
    paint-order: stroke;
    stroke: rgba(255, 255, 255, .6);
    stroke-width: 2px;
}

.lbl .lbl-big {
    font-size: 17px;
    letter-spacing: 1.300px;
}

.lbl .lbl-sm2 {
    letter-spacing: .5px;
}

.lbl .lbl-it {
    font-size: 13px;
    font-style: italic;
    letter-spacing: 1.800px;
    fill: #555;
}

.lbl .lbl-light {
    font-size: 14px;
    letter-spacing: 1.800px;
    fill: #8a8478;
    stroke: none;
}

.lbl .lbl-small {
    font-size: 13.500px;
    letter-spacing: .5px;
}

.shield {
    font-size: 10px;
    font-weight: bold;
    text-anchor: middle;
    fill: #333;
}

.mapnote {
    fill: #333;
    fill-rule: evenodd;
}

/* status bar */
.status-bar {
    height: 30px;
    background: #333;
    border-bottom: 1px solid #4d4d4d;
    display: flex;
    align-items: center;
    padding-left: 7px;
}

.scale-box {
    width: 125px;
    height: 28px;
    flex: none;
    box-sizing: border-box;
    background: #1c1c1c;
    border: 1px solid #888;
    display: flex;
    align-items: center;
    justify-content: space-between;
    padding: 0 6px;
}

.vsep {
    display: block;
    width: 1px;
    height: 22px;
    background: #666;
    flex: none;
}

.sep-a { margin-left: 6px; }
.sep-b { margin-left: 10px; }
.sep-c { margin-left: 211px; }
.sep-d { margin-left: 4px; }
.sep-e { margin-left: 12px; }
.sep-f { margin-left: 9px; }

.st-active {
    margin-left: 4px;
    width: 25px;
    height: 25px;
    box-sizing: border-box;
    background: #3a78ad;
    border: 1px solid #4a9ee0;
    display: flex;
    align-items: center;
    justify-content: center;
    flex: none;
}

.st-ico {
    width: 20px;
    height: 20px;
    margin-left: 5px;
    flex: none;
}

.st-grid {
    width: 17px;
    height: 17px;
    margin-left: 4px;
}

.st-chev {
    margin-left: 8px;
}

.coords {
    margin-left: 213px;
    white-space: nowrap;
}

.coords-chev {
    margin-left: 14px;
    color: #999;
}

.sel-count {
    margin-left: 5px;
    width: 163px;
    height: 24px;
    background: #222;
    display: flex;
    align-items: center;
    gap: 6px;
    white-space: nowrap;
    flex: none;
}

.sel-count .st-ico {
    margin-left: 3px;
}

.st-parcel {
    width: 16px;
    height: 16px;
    margin-left: 12px;
    flex: none;
}

.st-pause {
    width: 15px;
    height: 19px;
    margin-left: 7px;
    flex: none;
}

.st-refresh {
    width: 24px;
    height: 24px;
    margin-left: 7px;
    flex: none;
}

/* attribute table */
.table-tabs {
    height: 35px;
    display: flex;
    align-items: flex-end;
    flex: none;
}

.t-tab {
    height: 28px;
    display: flex;
    align-items: center;
    gap: 8px;
    padding: 2px 8px 0;
    box-sizing: border-box;
    border-radius: 4px 4px 0 0;
    color: #d0d0d0;
    white-space: nowrap;
}

.t-tab-on {
    background: #4e4e4e;
    margin-left: 25px;
    width: 184px;
}

.tbl-ico {
    width: 18px;
    height: 18px;
    flex: none;
}

.tab-x-t {
    color: #ccc;
}

.table-panel {
    border-top: 2px solid #4e4e4e;
    flex: 1;
    min-height: 0;
    margin-right: 4px;
}

.toolbar {
    height: 40px;
    box-sizing: border-box;
    margin-left: 3px;
    padding-top: 2px;
    background: #3a3a3a;
    border: 1px solid #4a4a4a;
    display: flex;
    align-items: center;
    white-space: nowrap;
    font-size: 14.200px;
    position: relative;
}

.tb-head {
    margin-left: 5px;
    font-weight: 700;
    font-size: 13.500px;
    color: #d0d0d0;
}

.tb-btn {
    display: flex;
    align-items: center;
    gap: 5px;
}

.tb-ico {
    width: 20px;
    height: 20px;
    flex: none;
}

.tb-add { margin-left: 9px; }
.tb-calc { margin-left: 13px; }
.tb-sba { margin-left: 10px; gap: 4px; }
.tb-zoom { margin-left: 12px; }
.tb-switch { margin-left: 13px; }
.tb-clear { margin-left: 9px; }
.tb-del { margin-left: 12px; }
.tb-copy { margin-left: 14px; gap: 4px; }

.tb-sep {
    width: 1px;
    height: 26px;
    background: #555;
    margin: 0 5px 0 14px;
}

.tb-menu {
    margin: 0 9px 0 auto;
    display: flex;
    flex-direction: column;
    gap: 2px;
}

.tb-menu i {
    display: block;
    width: 18px;
    height: 4px;
    border-radius: 1px;
    background: #a0a0a0;
}

.grid-frame {
    height: 241px;
    margin: 1px 0 0 2px;
    box-sizing: border-box;
    background: #262626;
    border: 1px solid #6a6a6a;
    display: flex;
}

.grid-main {
    flex: 1;
    display: flex;
    flex-direction: column;
    min-width: 0;
}

.grid {
    border-collapse: collapse;
    table-layout: fixed;
    width: 759px;
    font-size: 13.500px;
    color: #c6c6c6;
}

.c-num { width: 22px; }
.c-oid { width: 84px; }
.c-shape { width: 62px; }
.c-len { width: 103px; }
.c-area { width: 91px; }
.c-ident { width: 168px; }
.c-barrios { width: 168px; }
.c-cli { width: 61px; }

.grid th,
.grid td {
    height: 29.300px;
    padding: 0 5px;
    box-sizing: border-box;
    border: 1px solid #555;
    text-align: left;
    white-space: nowrap;
    overflow: hidden;
    background: #232323;
}

.grid th {
    background: #474747;
    font-weight: 700;
    font-size: 13px;
    color: #d6d6d6;
}

.grid .corner {
    background: #232323;
    position: relative;
}

.corner-tri {
    position: absolute;
    right: 3px;
    bottom: 3px;
    width: 0;
    height: 0;
    border-left: 13px solid transparent;
    border-bottom: 13px solid #666;
}

.grid .sorted {
    background: #1a4a6e;
    border-bottom: 3px solid #2196f3;
    color: #eee;
}

.grid .n {
    text-align: right;
}

.grid .num {
    background: #454545;
    text-align: center;
    padding: 0;
}

.r-cur .num {
    background: #1a4a6e !important;
    border-right: 3px solid #2196f3;
}

.r-cur .oid {
    background: #1a4a6e;
}

.r-sel td {
    background: #14888a;
}

.r-alt td {
    background: #4a4a4a;
}

.hscroll {
    margin-top: auto;
    height: 22px;
    background: #2b2b2b;
    display: flex;
    align-items: center;
    justify-content: space-between;
    padding: 0 10px;
}

.hs-l,
.hs-r {
    width: 6px;
    height: 10px;
}

.vscroll {
    width: 22px;
    flex: none;
    background: #2b2b2b;
    display: flex;
    flex-direction: column;
    align-items: center;
    padding: 7px 0 32px;
    box-sizing: border-box;
    gap: 7px;
}

.thumb {
    width: 11px;
    flex: 1;
    border-radius: 6px;
    background: #6c6c6c;
}

/* add-in panel */
.panel {
    margin: 8px 0 0 8px;
    flex: 1;
    min-width: 0;
    box-sizing: border-box;
    background: #363636;
    border: 1px solid #4c4c4c;
    border-right: 0;
    border-bottom: 0;
    border-radius: 4px 0 0 0;
    display: flex;
    flex-direction: column;
}

.panel-head {
    height: 42px;
    padding: 0 2px 0 7px;
    display: flex;
    align-items: center;
    flex: none;
}

.panel-title {
    font-size: 19px;
    color: #d4d4d4;
}

.panel-chev {
    margin-left: auto;
    color: #aaa;
}

.panel-pin {
    width: 10px;
    height: 13px;
    margin-left: 13px;
}

.panel-tabs {
    height: 24px;
    padding-left: 7px;
    display: flex;
    gap: 12px;
    font-size: 15px;
    line-height: 24px;
    color: #c8c8c8;
    flex: none;
}

.panel-tabs .on {
    color: #e6e6e6;
    font-weight: 600;
    letter-spacing: .1px;
    border-bottom: 2px solid #2196f3;
    height: 24px;
}

.form {
    padding-left: 31px;
    width: 369px;
}

.f-label {
    display: block;
    height: 24px;
    line-height: 24px;
    margin: 22px 0 11px;
    font-size: 17px;
    font-weight: 600;
    color: #e8e8e8;
}

.f-label em {
    font-style: normal;
    font-weight: 400;
}

.f-first {
    margin-top: 8px;
}

.f-poly {
    margin-top: 20px;
    margin-bottom: 18px;
}

.f-row {
    display: flex;
    justify-content: space-between;
    height: 34px;
}

.f-row-tall {
    height: 35px;
}

.f-input {
    width: 322px;
    height: 100%;
    box-sizing: border-box;
    background: #1f1f1f;
    border: 1px solid #5e5e5e;
    padding: 1px 4px 0;
    line-height: 24px;
    font-size: 14.300px;
    color: #d4d4d4;
    white-space: nowrap;
    overflow: hidden;
}

.f-wide {
    width: 369px;
}

.f-btn {
    width: 34px;
    height: 100%;
    padding: 0;
    background: #1260a8;
    border: 1px solid #255f95;
    display: flex;
    align-items: center;
    justify-content: center;
}

.f-btn svg {
    width: 12px;
    height: 10px;
}

.f-note {
    margin: 7px 0 0;
    line-height: 20px;
    font-size: 14.300px;
    color: #bcbcbc;
}

.mini {
    height: 55px;
    box-sizing: border-box;
    border: 1px solid #5e5e5e;
    background: #232323;
    font-size: 13.500px;
    color: #c4c4c4;
}

.mini-head {
    height: 28px;
    background: #4a4a4a;
    display: flex;
    line-height: 28px;
}

.mini-row {
    height: 24px;
    display: flex;
    line-height: 22px;
}

.m-id {
    width: 37px;
    flex: none;
    box-sizing: border-box;
    border-right: 1px solid #5e5e5e;
    text-align: center;
}

.m-left {
    text-align: left;
    padding-left: 3px;
}

.m-name {
    padding-left: 8px;
}

.mini-row .m-name {
    padding-left: 4px;
}

.actions {
    margin-top: 60px;
    padding-right: 29px;
    display: flex;
    align-items: center;
    justify-content: flex-end;
    gap: 18px;
}

.actions button {
    font-family: inherit;
    font-size: 14.500px;
    border-radius: 4px;
}

.btn-clear {
    width: 88px;
    height: 52px;
    background: #232323;
    border: 1px solid #b8b8b8;
    color: #c8c8c8;
}

.btn-build {
    width: 175px;
    height: 40px;
    background: #2196f3;
    border: 0;
    color: #f0f6fc;
}
```
